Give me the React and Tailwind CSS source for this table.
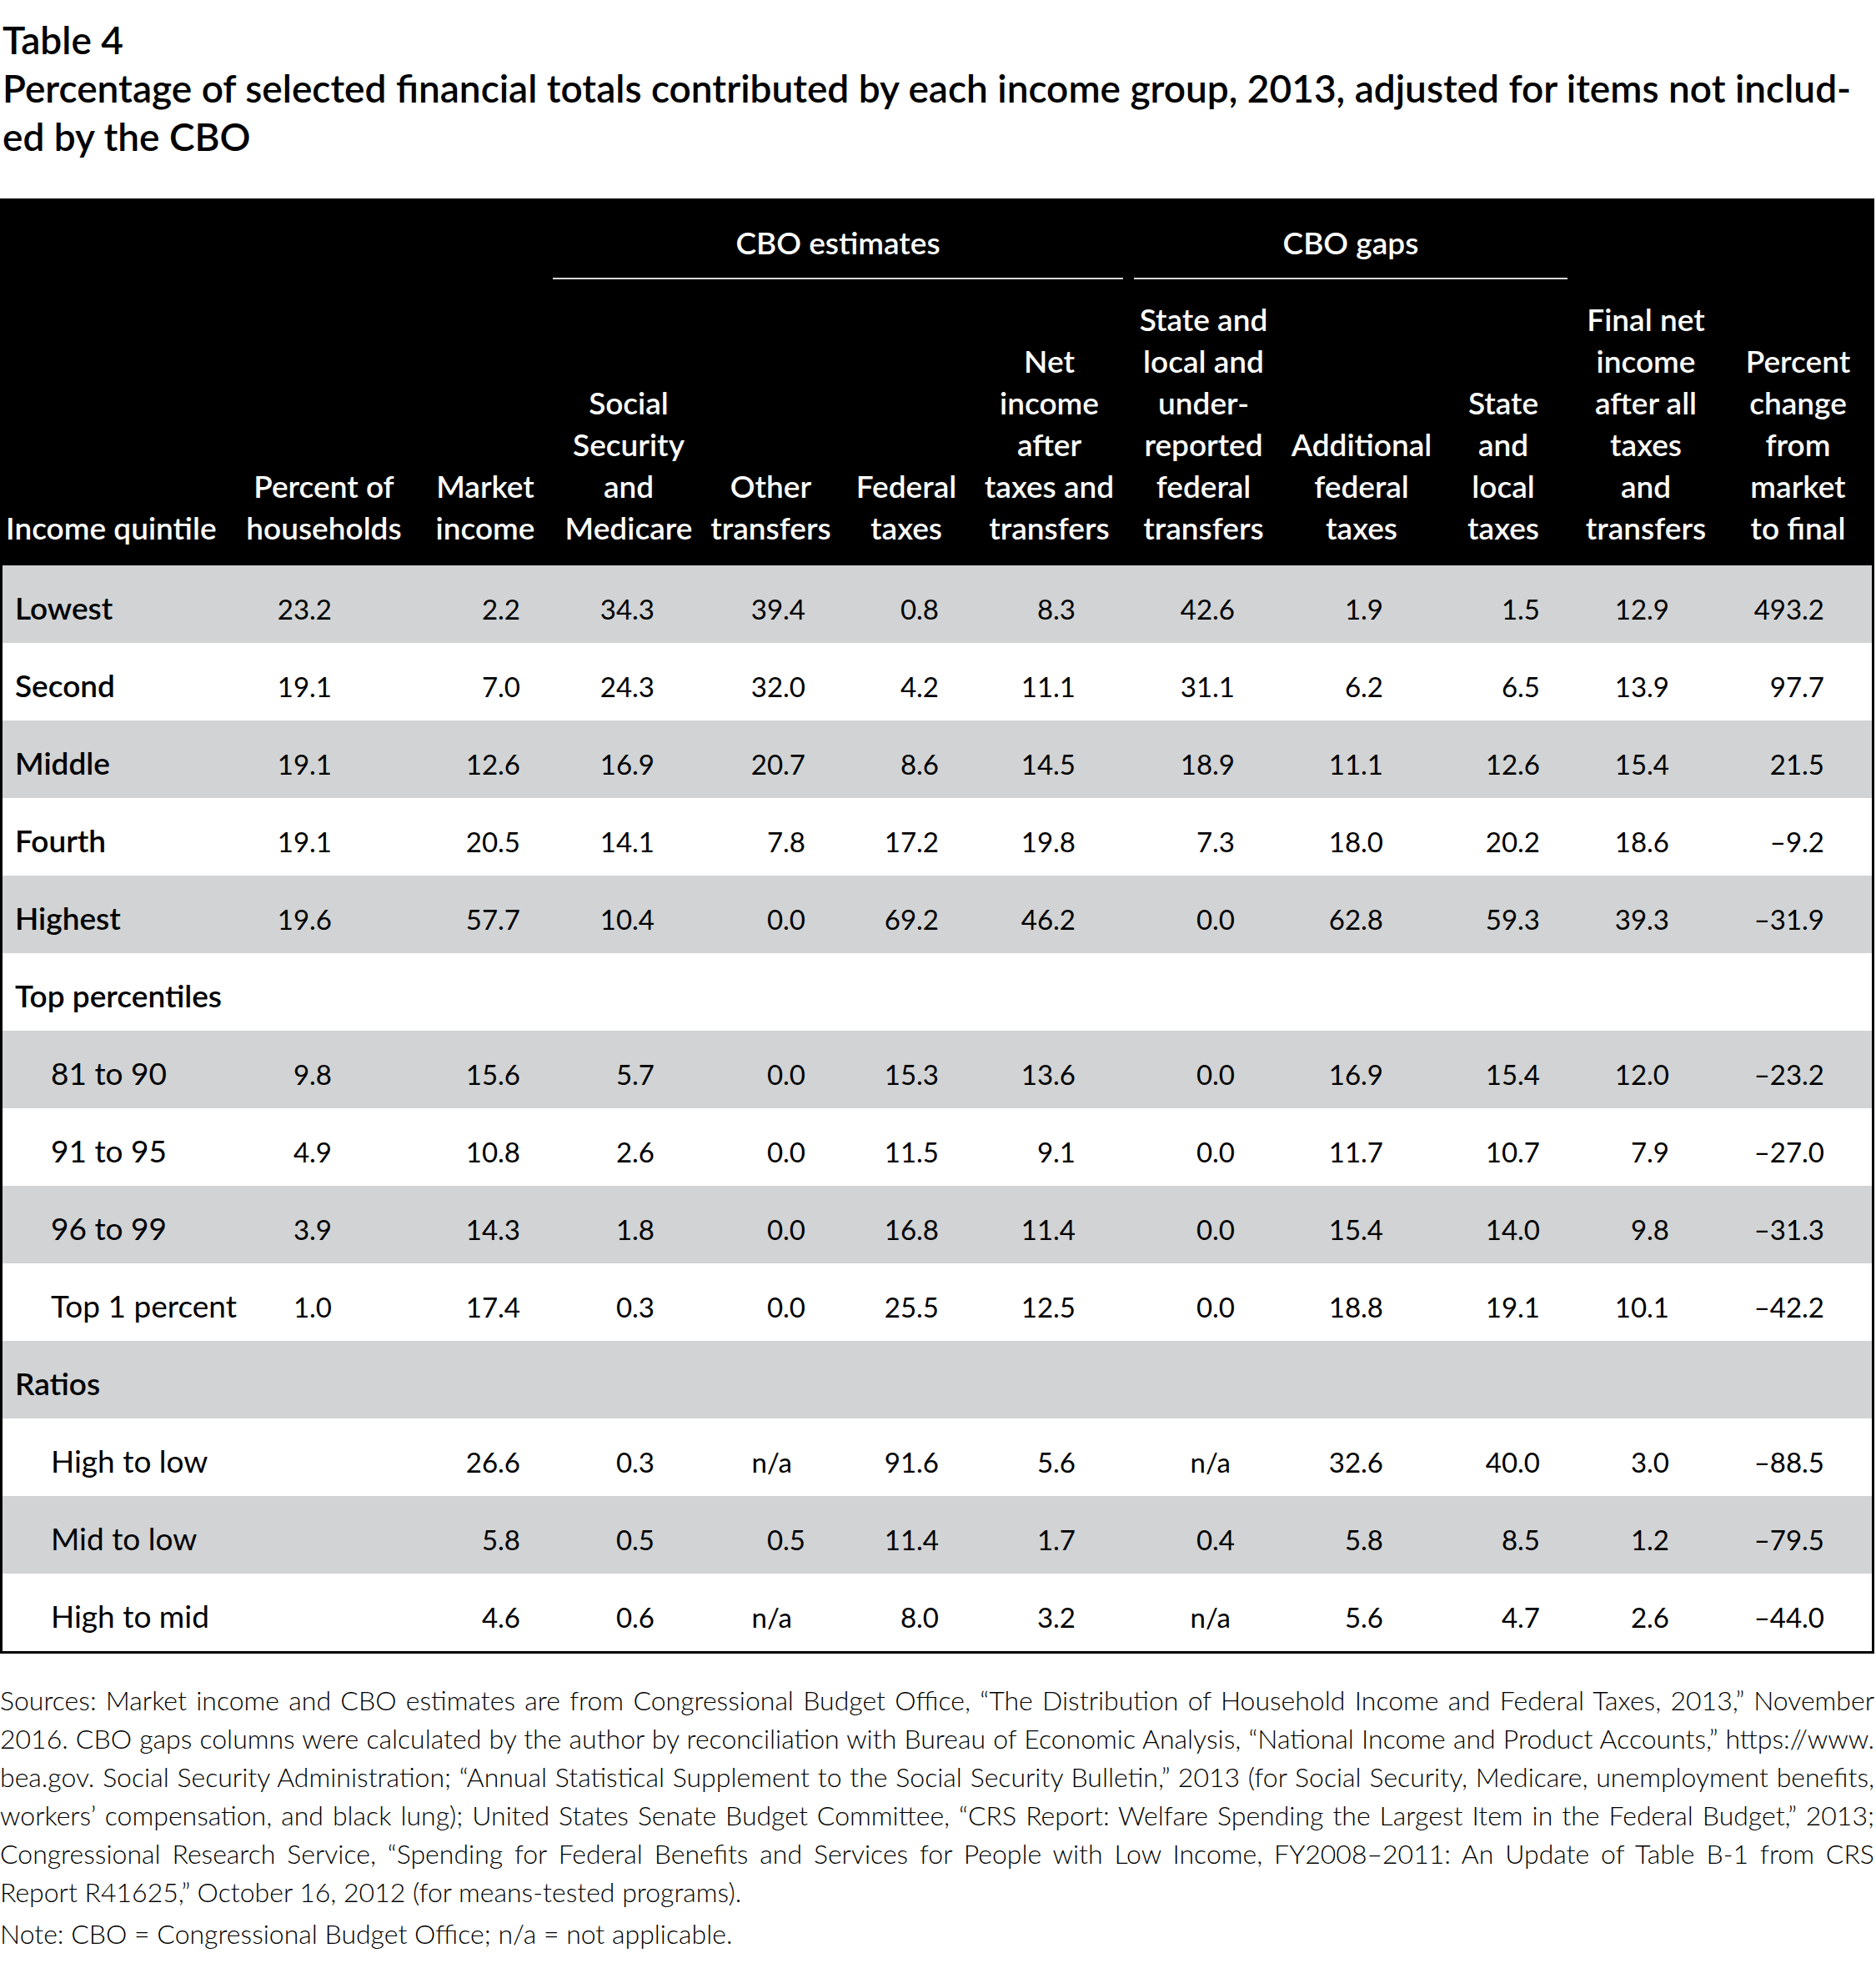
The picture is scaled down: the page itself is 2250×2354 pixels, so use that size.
import React from "react";

const gridCols =
  "grid grid-cols-[273px_225px_162px_182px_159px_166px_177px_193px_186px_154px_188px_177px]";

// right padding that puts the numbers where the reference has them
const numPad = [
  "pr-[103px]",
  "pr-[39px]",
  "pr-[60px]",
  "pr-[38px]",
  "pr-[44px]",
  "pr-[57px]",
  "pr-[59px]",
  "pr-[67px]",
  "pr-[33px]",
  "pr-[66px]",
  "pr-[57px]",
];

// n/a sits a bit left of the numbers
const naPad = [
  "pr-[103px]",
  "pr-[39px]",
  "pr-[60px]",
  "pr-[54px]",
  "pr-[44px]",
  "pr-[57px]",
  "pr-[64px]",
  "pr-[67px]",
  "pr-[33px]",
  "pr-[66px]",
  "pr-[57px]",
];

const headers = [
  ["Percent of", "households"],
  ["Market", "income"],
  ["Social", "Security", "and", "Medicare"],
  ["Other", "transfers"],
  ["Federal", "taxes"],
  ["Net", "income", "after", "taxes and", "transfers"],
  ["State and", "local and", "under-", "reported", "federal", "transfers"],
  ["Additional", "federal", "taxes"],
  ["State", "and", "local", "taxes"],
  ["Final net", "income", "after all", "taxes", "and", "transfers"],
  ["Percent", "change", "from", "market", "to final"],
];

const rows = [
  { label: "Lowest", bold: true, values: ["23.2", "2.2", "34.3", "39.4", "0.8", "8.3", "42.6", "1.9", "1.5", "12.9", "493.2"] },
  { label: "Second", bold: true, values: ["19.1", "7.0", "24.3", "32.0", "4.2", "11.1", "31.1", "6.2", "6.5", "13.9", "97.7"] },
  { label: "Middle", bold: true, values: ["19.1", "12.6", "16.9", "20.7", "8.6", "14.5", "18.9", "11.1", "12.6", "15.4", "21.5"] },
  { label: "Fourth", bold: true, values: ["19.1", "20.5", "14.1", "7.8", "17.2", "19.8", "7.3", "18.0", "20.2", "18.6", "–9.2"] },
  { label: "Highest", bold: true, values: ["19.6", "57.7", "10.4", "0.0", "69.2", "46.2", "0.0", "62.8", "59.3", "39.3", "–31.9"] },
  { label: "Top percentiles", bold: true, values: [] },
  { label: "81 to 90", values: ["9.8", "15.6", "5.7", "0.0", "15.3", "13.6", "0.0", "16.9", "15.4", "12.0", "–23.2"] },
  { label: "91 to 95", values: ["4.9", "10.8", "2.6", "0.0", "11.5", "9.1", "0.0", "11.7", "10.7", "7.9", "–27.0"] },
  { label: "96 to 99", values: ["3.9", "14.3", "1.8", "0.0", "16.8", "11.4", "0.0", "15.4", "14.0", "9.8", "–31.3"] },
  { label: "Top 1 percent", values: ["1.0", "17.4", "0.3", "0.0", "25.5", "12.5", "0.0", "18.8", "19.1", "10.1", "–42.2"] },
  { label: "Ratios", bold: true, values: [] },
  { label: "High to low", values: ["", "26.6", "0.3", "n/a", "91.6", "5.6", "n/a", "32.6", "40.0", "3.0", "–88.5"] },
  { label: "Mid to low", values: ["", "5.8", "0.5", "0.5", "11.4", "1.7", "0.4", "5.8", "8.5", "1.2", "–79.5"] },
  { label: "High to mid", values: ["", "4.6", "0.6", "n/a", "8.0", "3.2", "n/a", "5.6", "4.7", "2.6", "–44.0"] },
];

const sources = [
  "Sources: Market income and CBO estimates are from Congressional Budget Office, “The Distribution of Household Income and Federal Taxes, 2013,” November",
  "2016. CBO gaps columns were calculated by the author by reconciliation with Bureau of Economic Analysis, “National Income and Product Accounts,” https://www.",
  "bea.gov. Social Security Administration; “Annual Statistical Supplement to the Social Security Bulletin,” 2013 (for Social Security, Medicare, unemployment benefits,",
  "workers’ compensation, and black lung); United States Senate Budget Committee, “CRS Report: Welfare Spending the Largest Item in the Federal Budget,” 2013;",
  "Congressional Research Service, “Spending for Federal Benefits and Services for People with Low Income, FY2008–2011: An Update of Table B-1 from CRS",
];

function HeaderCell({ lines }) {
  return (
    <div className="flex flex-col items-center">
      {lines.map((line) => (
        <span key={line} className="whitespace-nowrap">
          {line}
        </span>
      ))}
    </div>
  );
}

function BodyRow({ row, index }) {
  const shaded = index % 2 === 0;
  return (
    <div className={`${gridCols} h-[93px] items-baseline pt-[29px] ${shaded ? "bg-[#d1d3d4]" : "bg-white"}`}>
      <div
        className={`whitespace-nowrap text-[37px] leading-[44px] ${
          row.bold ? "pl-[15px] font-semibold" : "pl-[58px] font-normal"
        }`}
      >
        {row.label}
      </div>
      {row.values.map((v, i) => (
        <div
          key={i}
          className={`text-right text-[33px] leading-[40px] font-normal ${v === "n/a" ? naPad[i] : numPad[i]}`}
        >
          {v}
        </div>
      ))}
    </div>
  );
}

export default function App() {
  return (
    <div className="w-[2250px] min-h-[2354px] bg-white text-black font-[Lato,sans-serif]">
      {/* title */}
      <div className="pt-[19px] pl-[3px] text-[46px] leading-[58px] font-semibold">
        <div>Table 4</div>
        <div className="whitespace-nowrap">
          Percentage of selected financial totals contributed by each income group, 2013, adjusted for items not includ-
        </div>
        <div>ed by the CBO</div>
      </div>

      {/* table */}
      <div className="mt-[45px] w-[2248px] border-x-[3px] border-b-[3px] border-black">
        <div className="bg-black text-white text-[37px] leading-[50px] font-semibold pt-[28px] pb-[20px]">
          <div className={gridCols}>
            <div className="col-start-4 col-span-4 text-center pb-[17px] border-b-2 border-[#d9d9d9]">
              CBO estimates
            </div>
            <div className="col-start-8 col-span-3 ml-[13px] text-center pb-[17px] border-b-2 border-[#d9d9d9]">
              CBO gaps
            </div>
          </div>
          <div className={`${gridCols} items-end mt-[23px]`}>
            <div className="pl-[4px] whitespace-nowrap">Income quintile</div>
            {headers.map((lines, i) => (
              <HeaderCell key={i} lines={lines} />
            ))}
          </div>
        </div>

        {rows.map((row, i) => (
          <BodyRow key={row.label} row={row} index={i} />
        ))}
      </div>

      {/* notes */}
      <div className="mt-[33px] w-[2248px] text-[32px] leading-[46px] font-light">
        {sources.map((line) => (
          <div key={line} className="text-justify [text-align-last:justify]">
            {line}
          </div>
        ))}
        <div>Report R41625,” October 16, 2012 (for means-tested programs).</div>
        <div className="mt-[4px]">Note: CBO = Congressional Budget Office; n/a = not applicable.</div>
      </div>
    </div>
  );
}
